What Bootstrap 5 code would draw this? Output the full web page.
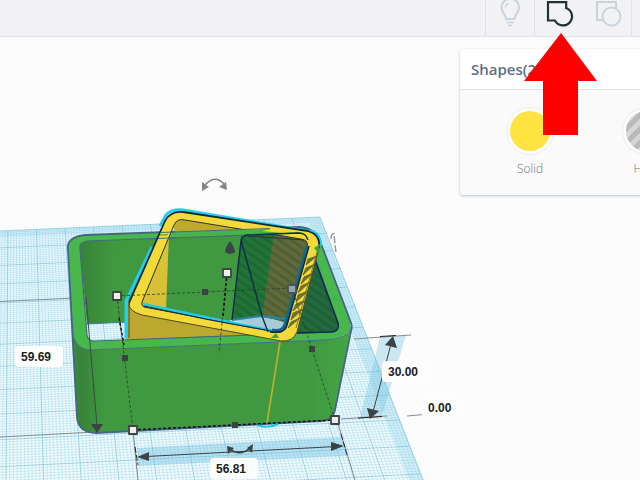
<!DOCTYPE html>
<html lang="en">
<head>
<meta charset="utf-8">
<meta name="viewport" content="width=device-width, initial-scale=1">
<title>3D Editor</title>
<link href="https://cdn.jsdelivr.net/npm/bootstrap@5.3.0/dist/css/bootstrap.min.css" rel="stylesheet">
<style>
body { background: #fcfcfc; font-family: "Open Sans", "Noto Sans", sans-serif; }
.topbar { min-height: 37px; background: #f2f2f5; border-bottom: 1px solid #dfe2e7; z-index: 3; }
.tool-group { border-left: 1px solid #dfe2e7; }
.tool-end { width: 9px; }
.tool { width: 48px; border: 0; background: none; }
.tool svg, .pointer, .scene { display: block; }
.pointer { top: 33px; left: 50%; margin-left: -35px; pointer-events: none; }
.shape-panel { width: 256px; margin: 12px -76px 0 0; background: #fafafa; border-radius: 3px; box-shadow: 0 1px 3px #b9c3cd; z-index: 1; }
.panel-title { height: 41px; padding: 0 11px; background: #fff; border-bottom: 1px solid #e0e3e8; font-size: 15px; line-height: 40px; font-weight: 600; color: #5d6f85; border-radius: 3px 3px 0 0; }
.panel-body { padding: 17px 12px 16px; }
.swatch { border: 0; background: none; color: #6f7580; font-size: 12px; line-height: 20px; font-weight: 300; padding: 0; }
.swatch-ring { width: 48px; height: 48px; border: 1px solid #eeeef0; border-radius: 50%; background: #fdfdfd; padding: 3px; margin: 0 auto 4px; }
.swatch-dot { display: block; width: 40px; height: 40px; border-radius: 50%; }
.dot-solid { background: #fee343; }
.dot-hole { background: repeating-linear-gradient(135deg, #b9b9b9 0 5px, #d6d6d6 5px 10px); }
.dim { width: 48px; height: 21px; border: 0; border-radius: 4px; background: #fdfdfd; padding: 0 6px; font: bold 12px/20px "Liberation Sans", Arial, sans-serif; color: #1c1c1c; }
.dim-depth { left: 15px; top: 309px; }
.dim-width { left: 210px; top: 421px; }
.dim-height { left: 382px; top: 324px; }
.dim-lift { left: 422px; top: 360px; width: 40px; }
</style>
</head>
<body class="vh-100 d-flex flex-column overflow-hidden">

<header class="topbar d-flex justify-content-end position-relative">
  <div class="tool-group d-flex">
    <button type="button" class="tool p-0" aria-label="Show all">
      <svg width="48" height="36" fill="none" stroke="#c9d3dc" stroke-width="2"><path d="M20 19C20 14 15.500 13 15.500 7.500A8.700 8.700 0 0 1 33 7.500C33 13 28.500 14 28.500 19Z"/><path d="M19.500 7.500Q19.500 4 23 3.500" stroke-width="1.500"/><path d="M20.500 22.500H28M22 25.500H26.500" stroke-width="1.700"/></svg>
    </button>
  </div>
  <div class="tool-group d-flex">
    <div class="position-relative d-flex">
      <button type="button" class="tool p-0" aria-label="Group">
        <svg width="48" height="36" fill="none" stroke="#22332f" stroke-width="2.200"><path d="M13 2.200H31.200V8A9 9 0 1 1 20 20.500H13Z"/></svg>
      </button>
      <svg class="pointer position-absolute" width="74" height="104" viewBox="0 0 74 104" aria-hidden="true"><path d="M37 0L73 48H54V102H19V48H0Z" fill="#f00"/></svg>
    </div>
    <button type="button" class="tool p-0" aria-label="Ungroup">
      <svg width="48" height="36" fill="none" stroke="#c9d3dc" stroke-width="2"><path d="M20 20H14V2H33V8"/><circle cx="28.500" cy="16.500" r="9"/></svg>
    </button>
  </div>
  <div class="tool-group tool-end"></div>
</header>

<main class="flex-grow-1 position-relative overflow-hidden d-flex justify-content-end align-items-start">
  <div class="position-absolute top-0 start-0">
    <svg class="scene" width="640" height="443" viewBox="0 37 640 443" fill="none" stroke-linejoin="round" role="img" aria-label="Workplane with a green box and a yellow box">
      <defs>
        <clipPath id="inside"><path d="M80 249Q79 242 87 241L300 233Q306 233 308 238L338 323Q340 332 330 332L96 341Q88 342 87 335Z"/></clipPath>
        <pattern id="hatch" width="7" height="7" patternUnits="userSpaceOnUse" patternTransform="rotate(35)"><path d="M0 0H7V3H0Z" fill="#0b3b30" fill-opacity=".22"/></pattern>
        <linearGradient id="front" x1="70" x2="350" y1="0" y2="0" gradientUnits="userSpaceOnUse"><stop offset="0" stop-color="#3c8f3e"/><stop offset=".04" stop-color="#388339"/><stop offset=".12" stop-color="#409941"/><stop offset=".86" stop-color="#409941"/><stop offset="1" stop-color="#43a544"/></linearGradient>
        <linearGradient id="back" x1="80" x2="115" y1="0" y2="0" gradientUnits="userSpaceOnUse"><stop offset="0" stop-color="#388339"/><stop offset="1" stop-color="#409941"/></linearGradient>
      </defs>

      <!-- workplane -->
      <path d="M0 231L320 217L424 480H0Z" fill="#f3fbfd"/>
      <path d="M0 231L320 217L424 480H409L309 223L0 237Z" fill="#a5dcf0" fill-opacity=".4"/>
      <path id="minor" stroke="#86cfe8" stroke-opacity=".45" stroke-width=".8"/>
      <path id="major" stroke="#55aece" stroke-opacity=".5" stroke-width="1"/>
      <path d="M0 301.500L117 296M0 437L133 430" stroke="#7d8f93" stroke-width="1"/>

      <!-- green box interior -->
      <g clip-path="url(#inside)">
        <path d="M78 230H345V345H290L284 320L262 317L230 320L224 345H130V322L87 324Z" fill="url(#back)"/>
        <path d="M126 300L283 338V345H126Z" fill="#bda82f"/>
        <path d="M308 238L338 323V333H298Z" fill="#236a3c"/>
        <path d="M306 238L338 323V333H298Z" fill="url(#hatch)"/>
        <path d="M232 320L262 316L287 320L281 332Z" fill="#a9cbd8"/>
        <path d="M241 236L308 233L284 322L262 316L232 320Z" fill="#237536"/>
        <path d="M274 234H310L284 321L262 317Z" fill="#626a3a"/>
        <path d="M241 236L308 233L284 322L262 316L232 320Z" fill="url(#hatch)"/>
        <path d="M232 320L262 316L285 319" stroke="#2587a4" stroke-width="2"/>
        <path d="M87 324L127 322" stroke="#477c92"/>
      </g>

      <!-- green box body -->
      <path d="M72 330Q74 349 90 350L325 340Q349 339 351 327L335 410Q333 420 322 421L96 433Q79 433 77 418Z" fill="url(#front)"/>
      <path fill-rule="evenodd" d="M68 250Q66 237 85 235L298 227Q314 227 320 241L350 320Q354 338 325 340L90 350Q74 349 72 330ZM80 249Q79 242 87 241L300 233Q306 233 308 238L338 323Q340 332 330 332L96 341Q88 342 87 335Z" fill="#49b84c"/>
      <path d="M68 250Q66 237 85 235L298 227Q314 227 320 241L350 320Q353 327 351 331L335 410Q333 420 322 421L96 433Q79 433 77 418Z" stroke="#456586" stroke-width="1.800"/>
      <path d="M72 330Q74 349 90 350L325 340Q349 339 351 327" stroke="#456c7d"/>
      <path d="M80 249Q79 242 87 241L300 233Q306 233 308 238L338 323Q340 332 330 332L96 341Q88 342 87 335Z" stroke="#42667f" stroke-width="1.200"/>
      <path d="M307 238L338 323Q340 332 330 332L297 333" stroke="#102b4e" stroke-width="1.500"/>

      <!-- yellow box -->
      <path d="M126 338V301L152 247M160 226L166 215Q171 209 183 210L314 232Q320 235 321 246" stroke="#22cdf0" stroke-width="3"/>
      <path d="M176 233L173 226Q176 218 184 219L272 233Z" fill="#bfa92e"/>
      <path d="M175 222L169 234L166 310L141 305Z" fill="#d7c136"/>
      <path fill-rule="evenodd" d="M129 303L165 221Q170 211 183 212L308 231Q321 235 319 248L297 332Q293 342 281 341L142 315Q128 311 129 303ZM142 302L174 225Q177 218 185 220L301 239Q309 240 307 247L286 326Q284 334 276 332L144 307Q141 306 142 302Z" fill="#f3da38"/>
      <path d="M142 302L174 225Q177 218 185 220L301 239Q309 240 307 247L286 326Q284 334 276 332L144 307Q141 306 142 302Z" stroke="#26352d"/>
      <path d="M129 303L165 221Q170 211 183 212L308 231Q321 235 319 248" stroke="#10283c" stroke-width="1.800"/>
      <path d="M319 248L297 332Q293 342 281 341L142 315Q128 311 129 303V338" stroke="#4a4925"/>
      <path d="M143 304L205 317L274 331" stroke="#22c9e8" stroke-width="2.400"/>
      <path d="M144 306L205 319L276 332" stroke="#123047" stroke-width="1.200"/>
      <path d="M307 246L285 324Q283 332 272 330" stroke="#176684" stroke-width="3"/>
      <path d="M309 246L287 325Q285 334 270 332" stroke="#0e2547" stroke-width="1.500"/>
      <path d="M317 252L296 328M306 268L315 264L303 275ZM304 277L313 273L301 284ZM301 286L310 282L298 293ZM298 295L308 291L296 302ZM296 304L306 300L293 311ZM293 313L303 309L291 320ZM291 322L300 318L288 328ZM308 259L317 256L306 265Z" fill="#6e7430" stroke="#655e27" stroke-width=".8"/>
      <path d="M314 248L320 244L318 253ZM271 338L276 333L279 338Z" fill="#39a646"/>
      <!-- rear rim crossing the yellow box -->
      <path d="M176 232L268 229L300 233L176 238Z" fill="#47b44b"/>
      <path d="M262 231L276 228L301 232L284 233Z" fill="#f3da38"/>
      <path d="M160 232.500L270 228.500M158 238.500L300 233" stroke="#456c77"/>
      <path d="M160 235L168 234.500" stroke="#68b43b" stroke-width="1.500"/>
      <path d="M232 320L241 241Q242 236 247 235L299 233Q306 233 308 240M241 240L262 316L268 332" stroke="#102b4e" stroke-width="1.400"/>
      <path d="M248 236L304 240" stroke="#26352d"/>
      <path d="M280 342L267 423" stroke="#b9b22e" stroke-width="1.600"/>
      <path d="M258 425Q268 429 278 424" stroke="#1ec5e6" stroke-width="2"/>

      <!-- guides -->
      <path d="M117 296L292 288M117 296L133 430M292 288L335 420M227 273L219 353" stroke="#24402c" stroke-opacity=".8" stroke-dasharray="3 2"/>
      <path d="M227 273L223 317M119 318L124 345M133 430L335 420" stroke="#111" stroke-width="1.500" stroke-dasharray="3 2"/>
      <path d="M86 297L97 426" stroke="#34503c"/>
      <path d="M133 430L138 480M338 424L355 480" stroke="#7d8080"/>
      <path d="M135 447L138 465M341 434L347 455" stroke="#222" stroke-dasharray="6 2"/>
      <path d="M137 448L341 437L347 456L138 466Z" fill="#6fc1e0" fill-opacity=".4"/>
      <path d="M380 337L406 335L382 416L360 418Z" fill="#6fc1e0" fill-opacity=".35"/>
      <path d="M354 339L411 335M341 419L387 416M407 416L430 414" stroke="#8c8c8c"/>
      <path d="M380 336.500L396 335.500M358 418L382 416.500" stroke="#222"/>
      <path d="M146 456.500L336 446.500M391 344L373 412" stroke="#3b4142"/>
      <g fill="#3d4344">
        <path d="M137 457L149 452V461ZM344 446L331 442V451ZM393 336L385 345L397 348ZM370 419L367 408L379 411ZM97 433L91 424H103Z"/>
        <path d="M230 241Q235 248 235 252Q230 256 225 252Q225 248 230 241Z"/>
        <path d="M202 289h6v6h-6ZM122 355h6v6h-6ZM309 346h6v6h-6ZM232 422h6v6h-6Z"/>
      </g>
      <path d="M230 449Q240 457 250 448" stroke="#3d4344" stroke-width="1.500"/><path d="M227 446L234 448L228 454ZM253 444L252 453L247 448Z" fill="#3d4344"/>
      <path d="M205 185Q215 174 224 184" stroke="#858585" stroke-width="1.600"/><path d="M202 191L202 182L209 187ZM227 190L219 187L226 182Z" fill="#858585"/>
      <path d="M331 239Q331 233 334 234L335 245L336 252" stroke="#929292" stroke-width="1.400" stroke-dasharray="7 2"/>
      <g fill="#eee" stroke="#3f4343" stroke-width="1.800"><path d="M113 292h8v8h-8ZM223 269h8v8h-8ZM129 426h8v8h-8ZM331 416h8v8h-8Z"/><path d="M288 285h8v8h-8Z" fill="#91a9ae" stroke="#4b5355"/></g>
    </svg>
    <input class="dim dim-depth position-absolute" aria-label="Depth" value="59.69">
    <input class="dim dim-width position-absolute" aria-label="Width" value="56.81">
    <input class="dim dim-height position-absolute" aria-label="Height" value="30.00">
    <input class="dim dim-lift position-absolute" aria-label="Elevation" value="0.00">
  </div>

  <section class="shape-panel flex-shrink-0" aria-label="Shape inspector">
    <h2 class="panel-title mb-0">Shapes(2)</h2>
    <div class="panel-body row g-0">
      <button type="button" class="swatch col-6"><span class="swatch-ring d-block"><span class="swatch-dot dot-solid"></span></span>Solid</button>
      <button type="button" class="swatch col-6"><span class="swatch-ring d-block"><span class="swatch-dot dot-hole"></span></span>Hole</button>
    </div>
  </section>
</main>

<script src="https://cdn.jsdelivr.net/npm/bootstrap@5.3.0/dist/js/bootstrap.bundle.min.js"></script>
<script>
// Workplane millimetres to canvas position, in perspective.
const project = (u, v) => {
  const s = u / 56.81, t = v / 59.69, w = 1 + 0.0057 * s + 0.1557 * t;
  return ((203.9 * s + 2.2 * t + 133) / w).toFixed(2) + ' ' + ((430 - 7.6 * s - 87.9 * t) / w).toFixed(2);
};
const right = 74.7, rear = 98.8;
let minor = '', major = '';
for (let i = 0; i <= 130; i++) {
  const line = 'M' + project(right - i, rear) + 'L' + project(right - i, -40);
  if (i % 10 === 0) major += line; else minor += line;
}
for (let i = 0; i <= 130; i++) {
  const line = 'M' + project(right, rear - i) + 'L' + project(-60, rear - i);
  if (i % 10 === 0) major += line; else minor += line;
}
document.getElementById('minor').setAttribute('d', minor);
document.getElementById('major').setAttribute('d', major);
</script>
</body>
</html>
